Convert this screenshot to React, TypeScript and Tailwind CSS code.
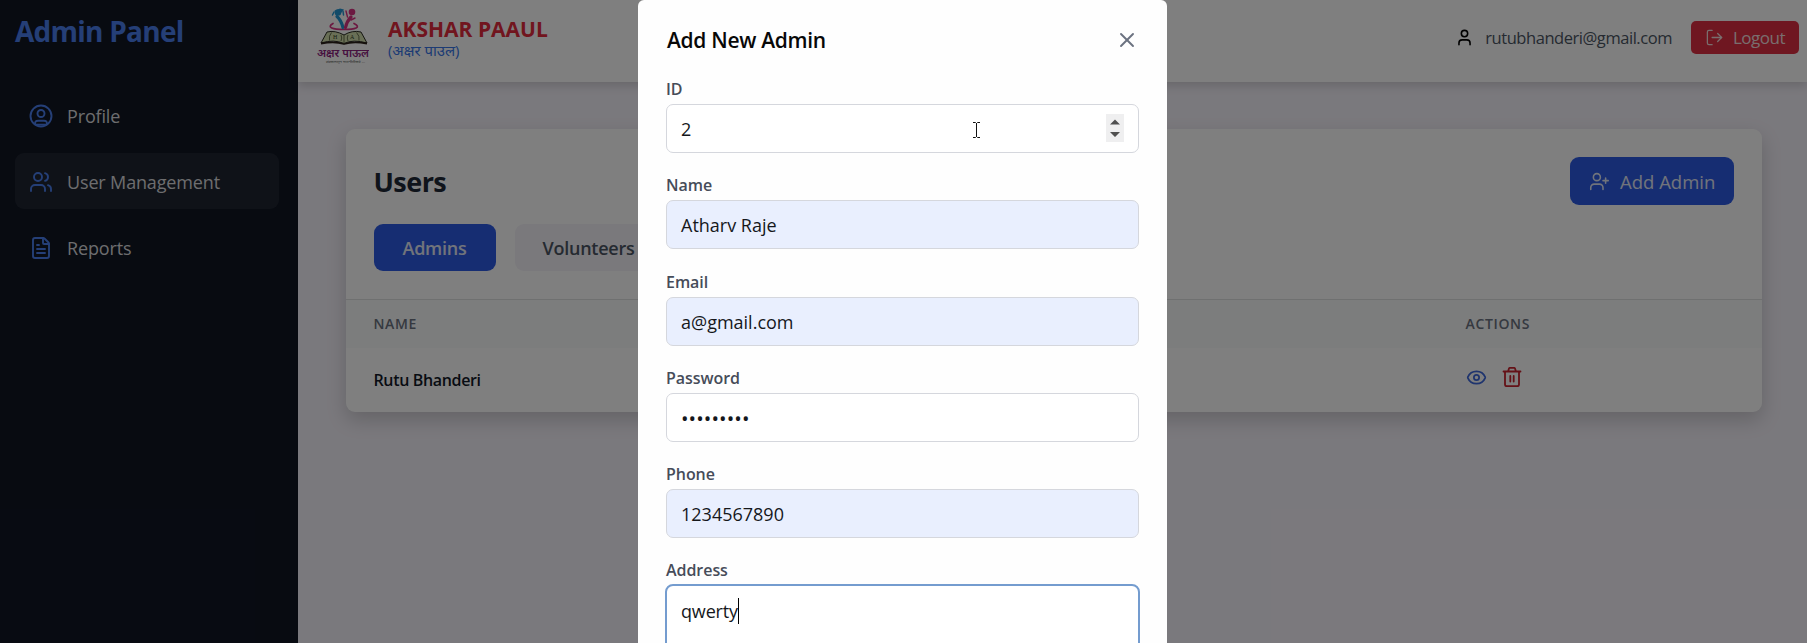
import React from "react";
import { Users, FileText, User, LogOut, UserPlus, Eye, X } from "lucide-react";

function Logo() {
  return (
    <svg width="52" height="56" viewBox="0 0 52 56" className="shrink-0">
      <g fill="none" strokeLinecap="round">
        <path d="M16 15.500C9 19.500 16 21.500 27 21.500C38 21.500 45 19.500 37 15.500" stroke="#d93383" strokeWidth="1.700" />
        <path d="M20 8.500Q24 12 26 19.500" stroke="#2597d3" strokeWidth="3.200" />
        <path d="M34 9Q30 13 28.500 19.500" stroke="#d93383" strokeWidth="3.200" />
        <path d="M17 4L15.500 7M26 3L26.500 7" stroke="#2597d3" strokeWidth="1.500" />
        <path d="M29 3L30.500 9M38 10L34 12" stroke="#d93383" strokeWidth="1.400" />
      </g>
      <circle cx="21" cy="4.500" r="3.300" fill="#2597d3" />
      <path d="M17 3L23 .5L27 1.500L24 5Z" fill="#2597d3" />
      <circle cx="35" cy="4" r="3.300" fill="#d93383" />
      <path d="M4 35L10 24Q18 22 27 27Q35 22 44 24L50 35Q36 31 27 35.500Q17 31 4 35Z" fill="#d2dfad" stroke="#2a2b22" strokeWidth="1" />
      <path d="M4 35.500Q18 33 27 36Q36 33 50 35.500" fill="none" stroke="#2a2018" strokeWidth="1.800" />
      <path d="M27 27V35.500M14.500 24.500Q11.500 28 12.500 32.500M24 27Q25.500 30 24 33M31 27Q29.500 30 31 33M39.500 24.500Q43 28 42 32.500" fill="none" stroke="#59623f" strokeWidth="0.900" />
      <text x="16" y="31" fontSize="6" fontFamily="Liberation Serif, serif" fill="#344022">H</text>
      <text x="33" y="31" fontSize="6" fontFamily="Liberation Serif, serif" fill="#344022">A</text>
      <text x="0" y="48.500" fontSize="10.500" fontWeight="600" textLength="52" lengthAdjust="spacingAndGlyphs" fontFamily="Noto Sans, sans-serif" fill="#8d237e">अक्षर पाऊल</text>
      <text x="9" y="54.500" fontSize="3.500" textLength="39" lengthAdjust="spacingAndGlyphs" fontFamily="Noto Sans, sans-serif" fill="#555">संस्कारातून राजनीतीकडे ...</text>
    </svg>
  );
}

type IconProps = { size?: number; strokeWidth?: number; className?: string };

function ProfileIcon({ size = 24, strokeWidth = 2, className }: IconProps) {
  return (
    <svg width={size} height={size} viewBox="0 0 24 24" fill="none" stroke="currentColor" strokeWidth={strokeWidth} strokeLinejoin="round" className={className}>
      <circle cx="12" cy="12" r="10.500" />
      <circle cx="12" cy="9.500" r="3.500" />
      <path d="M6.200 20.300Q5.500 16.800 9 16.800H15Q18.500 16.800 17.800 20.300Q17.300 20.600 16 20.600H8Q6.700 20.600 6.200 20.300Z" />
    </svg>
  );
}

function TrashIcon() {
  return (
    <svg width="20" height="20" viewBox="0 0 20 20" fill="none" stroke="currentColor" strokeWidth="1.800" strokeLinecap="round" strokeLinejoin="round">
      <path d="M1.500 4.500h17M3 4.500v13q0 1.700 1.700 1.700h10.600q1.700 0 1.700-1.700V4.500M6 4.500l1-3q.2-.6.8-.6h4.400q.6 0 .8.600l1 3M8.300 9v5.500M11.700 9v5.500" />
    </svg>
  );
}

const nav = [
  { label: "Profile", icon: ProfileIcon },
  { label: "User Management", icon: Users },
  { label: "Reports", icon: FileText },
];

function Sidebar() {
  return (
    <aside className="h-full w-[298px] shrink-0 bg-[#101623] px-[15px] pt-[10px]">
      <h1 className="h-[42px] text-[28px] leading-[42px] font-bold tracking-[-0.75px] text-[#4a7fee]">Admin Panel</h1>
      <nav className="mt-[35px] flex flex-col gap-[10px]">
        {nav.map(({ label, icon: Icon }, i) => (
          <div key={label} className={`flex h-14 w-[264px] items-center gap-[14px] rounded-[9px] px-[14px] ${i === 1 ? "bg-[#1f2531]" : ""}`}>
            <Icon size={24} strokeWidth={1.9} className="mt-px text-[#4a7fee]" />
            <span className="pt-[2px] text-[18px] tracking-[-0.15px] text-[#dadbde]">{label}</span>
          </div>
        ))}
      </nav>
    </aside>
  );
}

function Header() {
  return (
    <header className="relative flex h-[82px] items-start justify-between bg-white pr-2 pl-[19px] shadow-[0_4px_9px_rgba(0,0,0,0.15)]">
      <div className="flex pt-2">
        <Logo />
        <div className="ml-[19px] pt-[7px]">
          <div className="text-[21px] leading-7 font-bold text-[#e32b3d]">AKSHAR PAAUL</div>
          <div className="text-[15px] leading-[14px] tracking-[-0.05px] text-[#3976e8]">(अक्षर पाउल)</div>
        </div>
      </div>
      <div className="flex items-center pt-[21px]">
        <User size={19} className="mr-[11px] text-black" />
        <span className="pt-px text-[16.500px] tracking-[-0.45px] text-[#4b5563]">rutubhanderi@gmail.com</span>
        <button className="ml-[19px] flex h-[33px] w-[108px] items-center gap-[9px] rounded-[5px] bg-[#df2f43] pl-[14px] text-[17px] tracking-[-0.5px] text-[#f2dddd]">
          <LogOut size={19} strokeWidth={1.6} />
          <span className="pt-px">Logout</span>
        </button>
      </div>
    </header>
  );
}

function UsersCard() {
  return (
    <section className="mt-[47px] mr-[45px] ml-[47.500px] w-[1416.500px] overflow-hidden rounded-[9px] bg-white shadow-[0_8px_20px_rgba(0,0,0,0.18)]">
      <div className="flex h-[170px] flex-col px-7 pt-7">
        <div className="flex h-12 items-center justify-between">
          <h2 className="pt-[3px] text-[27px] font-bold tracking-[-0.55px] text-[#1f2937]">Users</h2>
          <button className="flex h-12 w-[164px] items-center gap-[10px] rounded-[9px] bg-[#2d5be5] pl-[19px] text-[18.500px] text-[#e3e8f6]">
            <UserPlus size={21} strokeWidth={1.8} />
            <span className="pt-[2px]">Add Admin</span>
          </button>
        </div>
        <div className="mt-[19px] flex gap-[19px] text-[18px] font-semibold tracking-[-0.25px]">
          <button className="h-[47px] w-[122px] rounded-[9px] bg-[#2d5be5] pt-px text-[#e3e8f6]">Admins</button>
          <button className="h-[47px] w-[178px] rounded-[9px] bg-[#f4f2f8] pt-px pl-7 text-left text-[#4b5563]">Volunteers</button>
        </div>
      </div>
      <div className="grid h-[49px] grid-cols-[1092px_1fr] items-center border-t border-[#dfe0e1] bg-[#f8fafb] px-7 text-[14px] font-semibold tracking-[0.65px] text-[#6b7280]">
        <span className="-mt-px">NAME</span>
        <span className="-mt-px">ACTIONS</span>
      </div>
      <div className="grid h-[64px] grid-cols-[1092px_1fr] px-7">
        <span className="pt-[18px] text-[16px] leading-7 font-semibold tracking-[-0.35px] text-[#111827]">Rutu Bhanderi</span>
        <div className="flex gap-[15px] pt-[19px]">
          <Eye size={21} className="text-[#3e69dc]" />
          <span className="text-[#c9232e]"><TrashIcon /></span>
        </div>
      </div>
    </section>
  );
}

const fields = [
  { label: "ID", value: "2" },
  { label: "Name", value: "Atharv Raje" },
  { label: "Email", value: "a@gmail.com" },
  { label: "Password", value: "•••••••••" },
  { label: "Phone", value: "1234567890" },
];
const filled = ["Name", "Email", "Phone"];

function Modal() {
  return (
    <div className="h-[720px] w-[529px] shrink-0 rounded-[6px] bg-[#fefefe] px-7">
      <div className="flex h-[75px] items-center justify-between pt-[6px]">
        <h3 className="pt-px pl-px text-[21px] font-semibold tracking-[-0.3px] text-[#080808]">Add New Admin</h3>
        <X size={24} strokeWidth={1.9} className="-mt-px text-[#6b7280]" />
      </div>
      {fields.map(({ label, value }) => (
        <div key={label} className="h-[96.300px]">
          <label className="block h-[29px] text-[16px] leading-[28px] font-semibold tracking-[-0.05px] text-[#464c59]">{label}</label>
          <div className={`relative flex h-[49px] items-center rounded-[7px] border border-[#d5d7dd] px-[14px] text-[18px] text-[#15171b] ${filled.includes(label) ? "bg-[#e9effe]" : "bg-white"}`}>
            <span className={label === "Password" ? "pt-[3px] text-[20px] tracking-[0.1px]" : "pt-[2px]"}>{value}</span>
            {label === "ID" && (
              <>
                <svg width="18" height="28" viewBox="0 0 18 28" className="-mt-px ml-auto">
                  <path d="M0 0H18V28H0Z" fill="#efeff0" />
                  <path d="M4 10.500L9 5.500L14 10.500ZM4 18L9 23L14 18Z" fill="#505050" />
                </svg>
                <svg width="7" height="16" viewBox="0 0 7 16" fill="none" stroke="#111" className="absolute top-[17px] left-[306px]">
                  <path d="M0 .5H2.500L3.500 1.500L4.500 .5H7M3.500 1V15M0 15.500H2.500L3.500 14.500L4.500 15.500H7" />
                </svg>
              </>
            )}
          </div>
        </div>
      ))}
      <label className="block h-[29px] text-[16px] leading-[28px] font-semibold tracking-[-0.05px] text-[#464c59]">Address</label>
      <div className="-mx-px -mt-px flex h-[100px] items-start rounded-[8px] border-2 border-[#749ccf] bg-white px-[14px] pt-[12px] text-[18px] leading-[27px] tracking-[-0.15px] text-[#15171b]">
        <span>qwerty</span>
        <span className="h-[26px] w-px bg-black" />
      </div>
    </div>
  );
}

export default function App() {
  return (
    <div className="relative h-[643px] w-[1807px] overflow-hidden bg-[#f5f2fa] font-['Open_Sans','Noto_Sans',sans-serif]">
      <div className="flex h-full">
        <Sidebar />
        <main className="w-[1509px] shrink-0">
          <Header />
          <UsersCard />
        </main>
      </div>
      <div className="absolute inset-0 flex items-start overflow-hidden bg-black/50 pl-[638px]">
        <Modal />
      </div>
    </div>
  );
}
